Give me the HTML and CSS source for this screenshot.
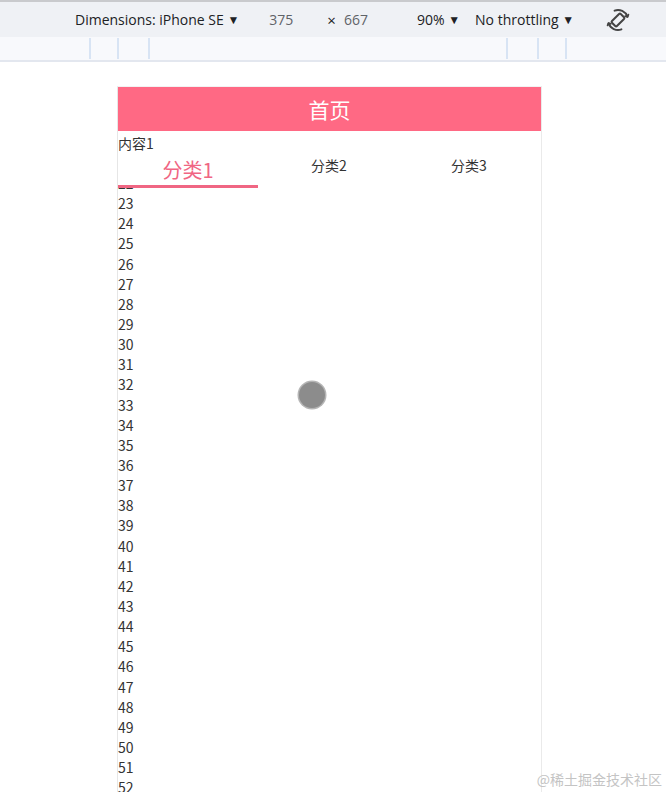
FILE: index.html
```html
<!DOCTYPE html>
<html lang="zh-CN">
<head>
<meta charset="utf-8">
<title>首页</title>
<link rel="stylesheet" href="styles.css">
</head>
<body>
<div class="toolbar">
  <span class="tb-item dims">Dimensions: iPhone SE <span class="caret">▼</span></span>
  <span class="tb-item num w">375</span>
  <span class="tb-item times">×</span>
  <span class="tb-item num h">667</span>
  <span class="tb-item zoom">90% <span class="caret">▼</span></span>
  <span class="tb-item throttle">No throttling <span class="caret">▼</span></span>
  <span class="tb-item rotate">
    <svg width="24" height="24" viewBox="0 0 24 24" fill="none" stroke="#444" stroke-width="2" stroke-linecap="round" stroke-linejoin="round">
      <rect x="8.5" y="5.8" width="7" height="12.4" rx="1.2" transform="rotate(45 12 12)"/>
      <path d="M8.6 2.6 A10 10 0 0 1 21.4 8.6"/>
      <path d="M15.4 21.4 A10 10 0 0 1 2.6 15.4"/>
      <path d="M19.2 8.2 L21.5 8.9 L22.4 6.6" stroke-width="1.8"/>
      <path d="M4.8 15.8 L2.5 15.1 L1.6 17.4" stroke-width="1.8"/>
    </svg>
  </span>
</div>
<div class="ruler">
  <div class="seg s1"></div><div class="seg s2"></div><div class="seg s3"></div><div class="seg s4"></div><div class="seg s5"></div>
</div>
<div class="viewport">
  <div class="device">
    <header class="app-header">首页</header>
    <div class="content-title">内容1</div>
    <nav class="tabs">
      <div class="tab active">分类1</div>
      <div class="tab">分类2</div>
      <div class="tab last">分类3</div>
    </nav>
    <div class="list-window">
      <ul class="list">
        <li>22</li><li>23</li><li>24</li><li>25</li><li>26</li><li>27</li><li>28</li><li>29</li><li>30</li>
        <li>31</li><li>32</li><li>33</li><li>34</li><li>35</li><li>36</li><li>37</li><li>38</li><li>39</li><li>40</li>
        <li>41</li><li>42</li><li>43</li><li>44</li><li>45</li><li>46</li><li>47</li><li>48</li><li>49</li><li>50</li>
        <li>51</li><li>52</li><li>53</li>
      </ul>
    </div>
  </div>
  <div class="touch-cursor"></div>
  <div class="watermark">@稀土掘金技术社区</div>
</div>
</body>
</html>
```

FILE: styles.css
```css
html, body {
  margin: 0;
  padding: 0;
  height: 792px;
  overflow: hidden;
  background: #ffffff;
}
body {
  font-family: "Noto Sans", "Noto Sans CJK SC", sans-serif;
  position: relative;
}
.toolbar {
  height: 35px;
  background: #eff1f5;
  border-top: 2px solid #c9cacd;
  display: flex;
  align-items: center;
  font-size: 14px;
  color: #202124;
  white-space: nowrap;
  font-family: "Open Sans", "Noto Sans", sans-serif;
}
.tb-item { display: inline-block; }
.caret { font-size: 12px; position: relative; top: -1px; }
.dims { margin-left: 75px; }
.num { color: #5f6368; }
.w { margin-left: 30px; }
.times { margin-left: 34px; font-size: 15px; }
.h { margin-left: 8px; }
.zoom { margin-left: 49px; }
.throttle { margin-left: 15px; }
.rotate { margin-left: 32px; height: 24px; }
.ruler {
  height: 22px;
  background: #f8f9fc;
  border-bottom: 2px solid #e3e7ef;
  display: flex;
  padding-left: 89px;
  padding-top: 1px;
}
.seg {
  height: 21px;
  border-left: 2px solid #d8e4f4;
}
.s1 { width: 26px; }
.s2 { width: 29px; }
.s3 { width: 356px; }
.s4 { width: 29px; }
.s5 { width: 26px; border-right: 2px solid #d8e4f4; }
.viewport {
  position: relative;
  padding-top: 24px;
  height: 707px;
  overflow: hidden;
}
.device {
  margin-left: 117px;
  width: 423px;
  height: 720px;
  border-left: 1px solid #e6e6e6;
  border-right: 1px solid #eaeaea;
  border-top: 1px solid #f2f2f2;
  font-family: "Noto Sans CJK SC", "Noto Sans", sans-serif;
  color: #333333;
}
.app-header {
  height: 44px;
  background: #ff6984;
  color: #ffffff;
  font-size: 21px;
  display: flex;
  align-items: center;
  justify-content: center;
}
.content-title {
  font-size: 14px;
  line-height: 22px;
  padding-top: 1px;
}
.tabs {
  display: flex;
  height: 34px;
  background: #ffffff;
  position: relative;
  z-index: 1;
}
.tab {
  flex: 1;
  text-align: center;
  font-size: 14px;
  line-height: 23px;
  color: #333333;
}
.tab.active {
  color: #f06683;
  font-size: 20px;
  line-height: 30px;
  border-bottom: 3px solid #f06683;
  height: 30px;
  margin-top: 1px;
  flex: 0 0 140px;
}
.tab.active + .tab { flex: 0 0 142px; }
.tab.last { padding-right: 3px; }
.list-window {
  height: 640px;
  overflow: hidden;
}
.list {
  list-style: none;
  margin: -15px 0 0 0;
  padding: 0;
  font-size: 14px;
  line-height: 20.14px;
  color: #333333;
}
.touch-cursor {
  position: absolute;
  left: 299px;
  top: 320px;
  width: 26px;
  height: 26px;
  border-radius: 50%;
  background: #8c8c8c;
  box-shadow: 0 0 0 1.5px #b5b5b5;
}
.watermark {
  position: absolute;
  right: 4px;
  bottom: 4px;
  font-size: 14px;
  color: #c4c4c4;
  font-family: "Noto Sans CJK SC", sans-serif;
}
```
